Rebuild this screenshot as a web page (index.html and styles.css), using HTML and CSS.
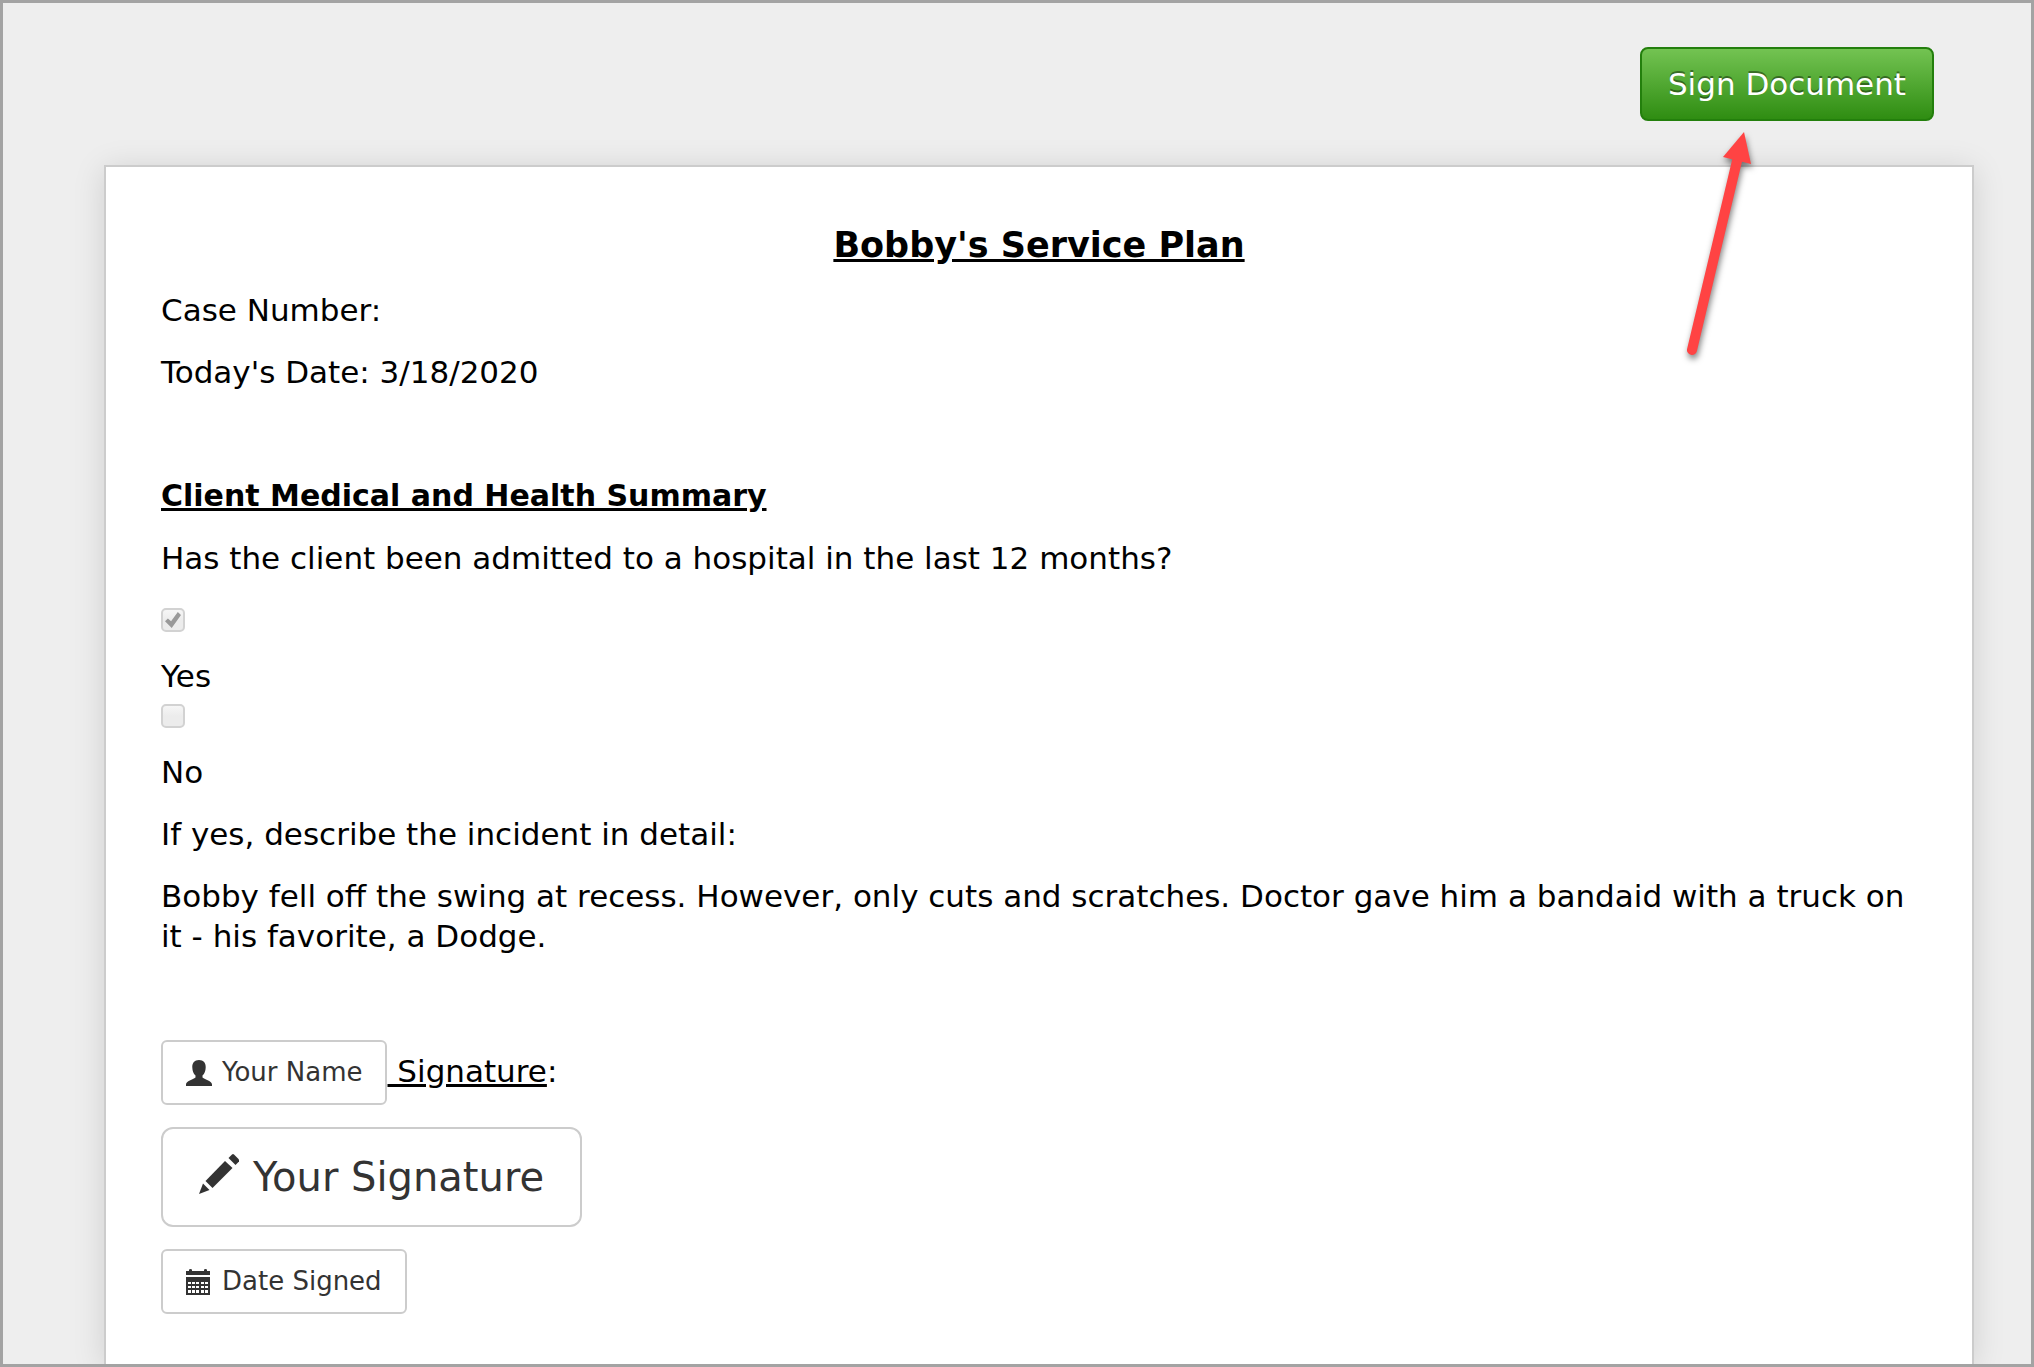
FILE: index.html
```html
<!DOCTYPE html>
<html lang="en">
<head>
    <meta charset="UTF-8">
    <meta name="viewport" content="width=device-width, initial-scale=1.0">
    <title>Bobby's Service Plan</title>
    <link rel="stylesheet" href="styles.css">
</head>
<body>
    <div class="page">
        <header class="toolbar">
            <div class="sign-wrapper">
                <button type="button" class="sign-button">Sign Document</button>
                <svg class="arrow" width="80" height="240" viewBox="0 0 80 240" aria-hidden="true">
                    <path d="M32 223L77 34" stroke="#ff4343" stroke-width="10" stroke-linecap="round"/>
                    <path d="M84 5L63 30L91 37Z" fill="#ff4343"/>
                </svg>
            </div>
        </header>

        <main class="paper">
            <h1 class="title">Bobby's Service Plan</h1>
            <p>Case Number:</p>
            <p>Today's Date: 3/18/2020</p>
            <p>&nbsp;</p>
            <h2 class="section-title">Client Medical and Health Summary</h2>
            <p>Has the client been admitted to a hospital in the last 12 months?</p>

            <div class="options">
                <div class="option">
                    <input type="checkbox" id="answer-yes" class="checkbox" checked disabled>
                    <label for="answer-yes">Yes</label>
                </div>
                <div class="option">
                    <input type="checkbox" id="answer-no" class="checkbox" disabled>
                    <label for="answer-no">No</label>
                </div>
            </div>

            <p>If yes, describe the incident in detail:</p>
            <p>Bobby fell off the swing at recess. However, only cuts and scratches. Doctor gave him a bandaid with a truck on it - his favorite, a Dodge.</p>
            <p>&nbsp;</p>

            <div class="fields">
                <div class="name-row">
                    <button type="button" class="field-button">
                        <svg class="icon" viewBox="0 0 26 26" aria-hidden="true">
                            <path d="M13 0C17.500 0 20 3 19.700 7.500C19.500 11 18.700 13.500 16.500 15.500V17.500C19 19.500 26 21 26 24.500V26H0V24.500C0 21 7 19.500 9.500 17.500V15.500C7.300 13.500 6.500 11 6.300 7.500C6 3 8.500 0 13 0Z"/>
                        </svg>
                        Your Name
                    </button>
                    <span class="name-label"><u>&nbsp;Signature</u>:</span>
                </div>
                <button type="button" class="field-button field-button-large">
                    <svg class="icon" viewBox="0 0 40 40" aria-hidden="true">
                        <path d="M0 40L4 29.500L10.500 36Z"/>
                        <path d="M6.500 27L26 7L33.500 14L13.500 34Z"/>
                        <path d="M29.500 4L33 .5Q34 -.3 35 .5L40 5.500Q40.800 6.500 40 7.500L36.500 11Z"/>
                    </svg>
                    Your Signature
                </button>
                <button type="button" class="field-button">
                    <svg class="icon" viewBox="0 0 26 26" aria-hidden="true">
                        <path d="M0 2H3V1Q3 0 4.500 0Q6 0 6 1V2H18V1Q18 0 19.500 0Q21 0 21 1V2H24V6H0Z"/>
                        <path fill-rule="evenodd" d="M0 8H24V26H0ZM2 13V15H5V13ZM6 13V15H9V13ZM10 13V15H13V13ZM15 13V15H18V13ZM19 13V15H22V13ZM2 17V19H5V17ZM6 17V19H9V17ZM10 17V19H13V17ZM15 17V19H18V17ZM19 17V19H22V17ZM2 21V24H5V21ZM6 21V24H9V21ZM10 21V24H13V21ZM15 21V24H18V21ZM19 21V24H22V21Z"/>
                    </svg>
                    Date Signed
                </button>
            </div>
        </main>
    </div>
</body>
</html>
```
FILE: styles.css
```css
* {
    box-sizing: border-box;
}

body {
    margin: 0;
    font-family: Verdana, "DejaVu Sans", sans-serif;
    font-size: 31px;
    line-height: 40px;
    color: #000;
}

.page {
    display: flex;
    flex-direction: column;
    min-height: 100vh;
    padding: 44px 57px 0 101px;
    border: 3px solid #a3a3a3;
    background-color: #eee;
    overflow: hidden;
}

.toolbar {
    display: flex;
    justify-content: flex-end;
    padding: 0 40px 44px 0;
}

.sign-wrapper {
    position: relative;
}

.sign-button {
    display: block;
    padding: 15px 26px;
    border: 2px solid #237f0c;
    border-radius: 8px;
    background: linear-gradient(#73c352, #2f8d12);
    color: #fff;
    font-family: inherit;
    font-size: 31px;
    line-height: 40px;
    text-shadow: 0 -2px 0 rgba(0, 0, 0, 0.4);
    cursor: pointer;
}

/* pointer drawn over the toolbar and the paper */
.arrow {
    position: absolute;
    top: 80px;
    left: 20px;
    overflow: visible;
    filter: drop-shadow(1px 4px 3px rgba(0, 0, 0, 0.5));
    pointer-events: none;
}

.paper {
    flex: 1;
    padding: 56px 55px 30px;
    border: 2px solid #ccc;
    border-bottom: none;
    background-color: #fff;
    box-shadow: 0 4px 30px rgba(0, 0, 0, 0.13);
}

.paper p {
    margin: 0 0 22px;
}

.title {
    margin: 0 0 22px;
    font-size: 35px;
    line-height: 45px;
    text-align: center;
    text-decoration: underline;
}

.section-title {
    margin: 0 0 22px;
    font-size: 30px;
    line-height: 40px;
    text-decoration: underline;
}

.options {
    margin-bottom: 22px;
}

.option {
    display: flex;
    flex-direction: column;
    align-items: flex-start;
    gap: 24px;
    padding-top: 8px;
}

.checkbox {
    appearance: none;
    width: 24px;
    height: 24px;
    margin: 0;
    border: 2px solid #d2d2d2;
    border-radius: 5px;
    background: linear-gradient(#f6f6f6, #ececec 50%);
}

.checkbox:checked::before {
    content: "";
    display: block;
    width: 16px;
    height: 16px;
    margin: 2px;
    background-color: #999;
    clip-path: polygon(0 58%, 18% 40%, 38% 58%, 80% 0, 100% 18%, 42% 100%);
}

.fields {
    display: flex;
    flex-direction: column;
    align-items: flex-start;
    gap: 22px;
}

.name-row {
    display: flex;
    align-items: center;
}

.name-label {
    padding-bottom: 4px;
}

.field-button {
    display: flex;
    align-items: center;
    gap: 10px;
    padding: 11px 23px;
    border: 2px solid #ccc;
    border-radius: 6px;
    background-color: #fff;
    color: #333;
    font-family: inherit;
    font-size: 26px;
    line-height: 39px;
    cursor: pointer;
}

.field-button-large {
    padding: 22px 36px;
    gap: 14px;
    border-radius: 12px;
    font-size: 40px;
    line-height: 52px;
}

.icon {
    width: 26px;
    height: 26px;
    fill: currentColor;
}

.field-button-large .icon {
    width: 40px;
    height: 40px;
    margin-bottom: 6px;
}
```
